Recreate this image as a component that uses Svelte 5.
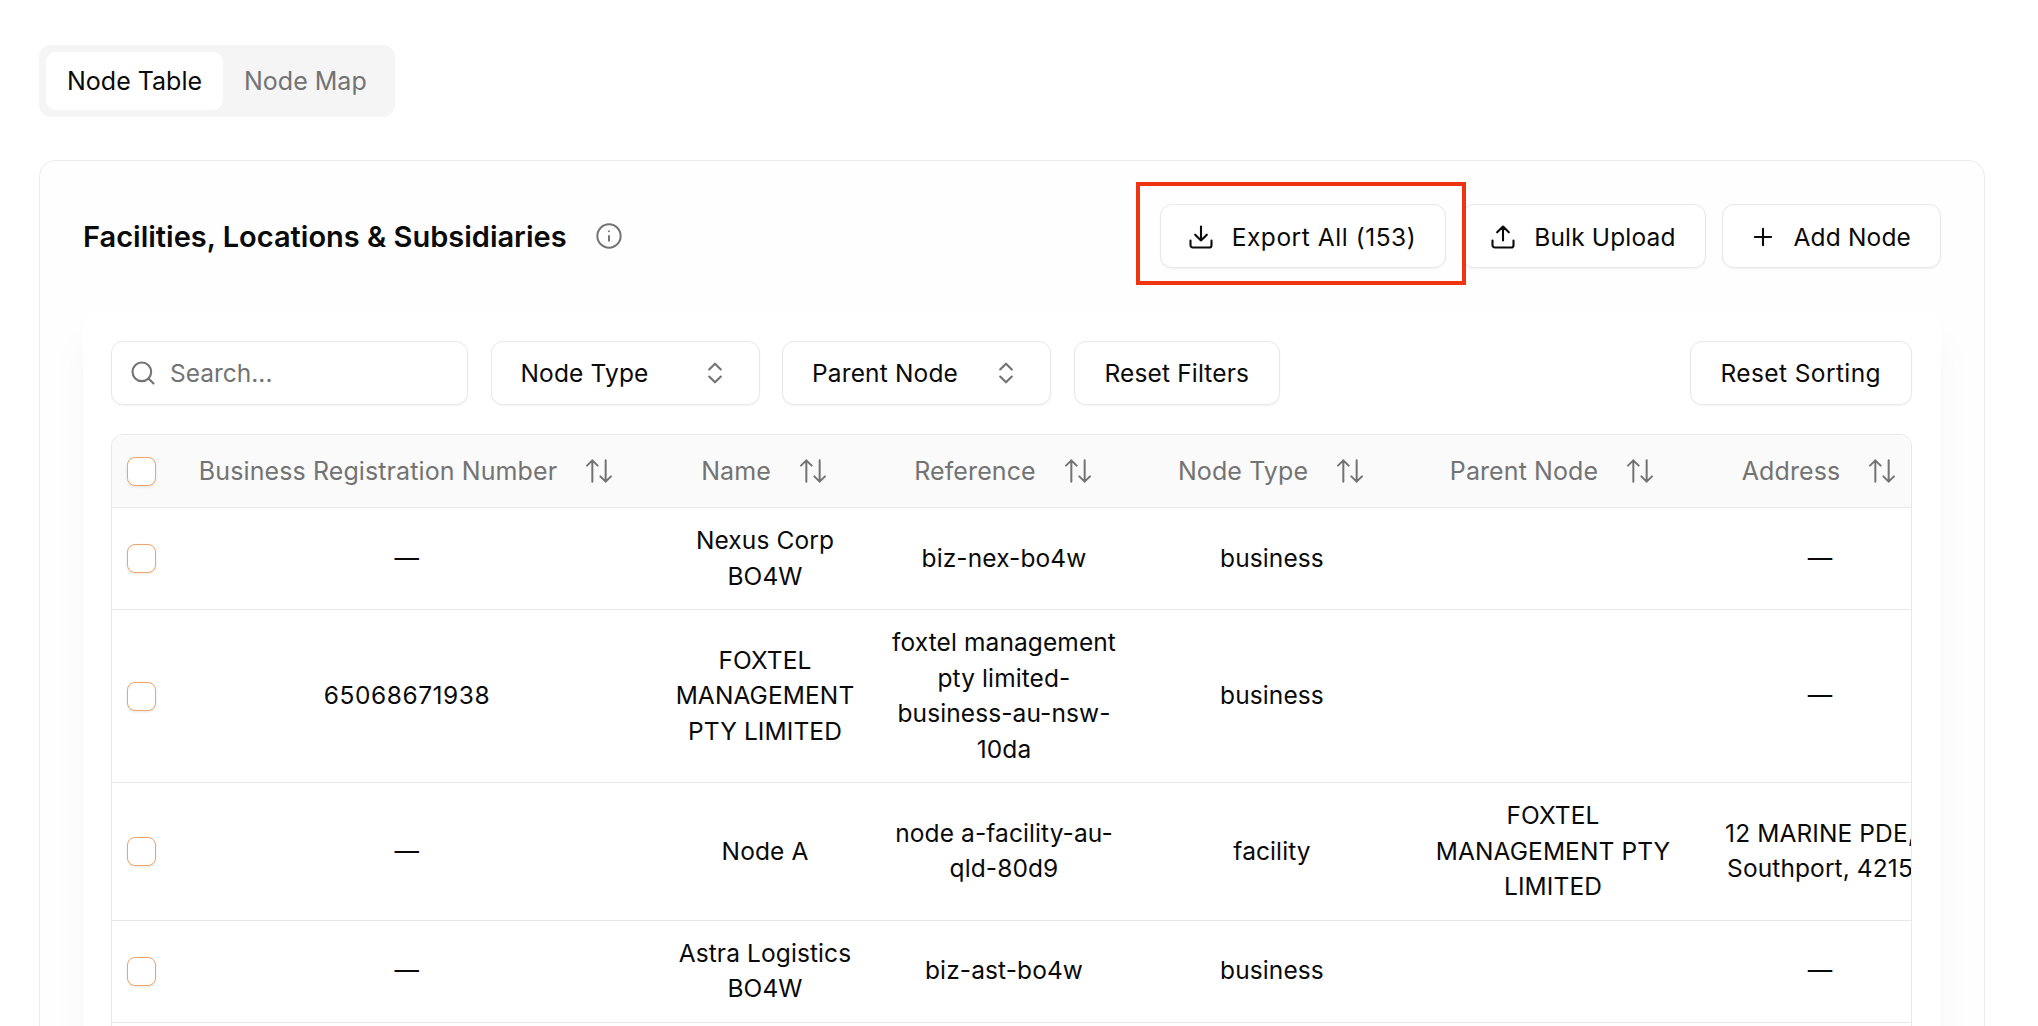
<script>
	const cols = [
		{ label: 'Business Registration Number', w: 480 },
		{ label: 'Name', w: 236 },
		{ label: 'Reference', w: 242 },
		{ label: 'Node Type', w: 294 },
		{ label: 'Parent Node', w: 268 },
		{ label: 'Address', w: 266 }
	];

	const rows = [
		{ brn: '—', name: 'Nexus Corp BO4W', ref: 'biz-nex-bo4w', type: 'business', parent: '', address: '—' },
		{ brn: '65068671938', name: 'FOXTEL MANAGEMENT PTY LIMITED', ref: 'foxtel management pty limited-business-au-nsw-10da', type: 'business', parent: '', address: '—' },
		{ brn: '—', name: 'Node A', ref: 'node a-facility-au-qld-80d9', type: 'facility', parent: 'FOXTEL MANAGEMENT PTY LIMITED', address: '12 MARINE PDE, Southport, 4215' },
		{ brn: '—', name: 'Astra Logistics BO4W', ref: 'biz-ast-bo4w', type: 'business', parent: '', address: '—' },
		// next row only starts at the fold
		{ brn: '', name: '', ref: '', type: '', parent: '', address: '' }
	];
</script>

<main>
	<div class="tabs">
		<button class="tab active">Node Table</button>
		<button class="tab">Node Map</button>
	</div>

	<section class="card">
		<header>
			<div class="title">
				<h2>Facilities, Locations &amp; Subsidiaries</h2>
				<svg class="info" viewBox="0 0 24 24"><circle cx="12" cy="12" r="10" /><path d="M12 16v-4M12 8h.01" /></svg>
			</div>
			<div class="actions">
				<div class="marked">
					<button class="btn">
						<svg viewBox="0 0 24 24"><path d="M21 15v4a2 2 0 0 1-2 2H5a2 2 0 0 1-2-2v-4M7 10l5 5 5-5M12 15V3" /></svg>
						Export All (153)
					</button>
				</div>
				<button class="btn">
					<svg viewBox="0 0 24 24"><path d="M21 15v4a2 2 0 0 1-2 2H5a2 2 0 0 1-2-2v-4M17 8l-5-5-5 5M12 3v12" /></svg>
					Bulk Upload
				</button>
				<button class="btn">
					<svg viewBox="0 0 24 24"><path d="M5 12h14M12 5v14" /></svg>
					Add Node
				</button>
			</div>
		</header>

		<div class="panel">
			<div class="filters">
				<label class="search">
					<svg viewBox="0 0 24 24"><circle cx="11" cy="11" r="8" /><path d="m21 21-4.3-4.3" /></svg>
					<input placeholder="Search..." />
				</label>
				<button class="btn select">Node Type <svg viewBox="0 0 24 24"><path d="m7 15 5 5 5-5M7 9l5-5 5 5" /></svg></button>
				<button class="btn select">Parent Node <svg viewBox="0 0 24 24"><path d="m7 15 5 5 5-5M7 9l5-5 5 5" /></svg></button>
				<button class="btn">Reset Filters</button>
				<button class="btn sorting">Reset Sorting</button>
			</div>

			<div class="table-wrap">
				<table>
					<colgroup>
						<col style="width: 55px" />
						{#each cols as col}<col style="width: {col.w}px" />{/each}
					</colgroup>
					<thead>
						<tr>
							<th><span class="check"></span></th>
							{#each cols as col}
								<th>
									<span class="head">
										{col.label}
										<svg viewBox="0 0 24 24"><path d="m21 16-4 4-4-4M17 20V4M3 8l4-4 4 4M7 4v16" /></svg>
									</span>
								</th>
							{/each}
						</tr>
					</thead>
					<tbody>
						{#each rows as row}
							<tr>
								<td><span class="check"></span></td>
								<td class="num">{row.brn}</td>
								<td>{row.name}</td>
								<td>{row.ref}</td>
								<td>{row.type}</td>
								<td>{row.parent}</td>
								<td>{row.address}</td>
							</tr>
						{/each}
					</tbody>
				</table>
			</div>
		</div>
	</section>
</main>

<style>
	:global(body) {
		height: 1026px;
		overflow: hidden;
		background: #fff;
	}
	main {
		height: 1026px;
		box-sizing: border-box;
		overflow: hidden;
		padding: 45px 53px 0 39px;
		font-family: Inter, "Liberation Sans", sans-serif;
		font-size: 24.5px;
		letter-spacing: .1px;
		color: #0a0a0a;
	}
	button {
		font: inherit;
		letter-spacing: .15px;
		color: inherit;
		cursor: pointer;
	}
	svg {
		fill: none;
		stroke: currentColor;
		stroke-width: 2;
		stroke-linecap: round;
		stroke-linejoin: round;
		flex: none;
	}

	.tabs {
		display: inline-flex;
		padding: 7px;
		background: #f5f5f5;
		border-radius: 12px;
		height: 72px;
		box-sizing: border-box;
		vertical-align: top;
	}
	.tab {
		border: none;
		background: none;
		font-size: 25px;
		padding: 0 21px;
		border-radius: 10px;
		color: #737373;
		letter-spacing: 0;
	}
	.tab.active {
		background: #fff;
		color: #0a0a0a;
	}

	.card {
		margin-top: 43px;
		border: 1px solid #ebebeb;
		border-radius: 16px;
		padding: 43px 43px 40px;
		background: #fefefe;
	}
	header {
		display: flex;
		justify-content: space-between;
		align-items: center;
	}
	.title {
		display: flex;
		align-items: center;
		gap: 28px;
	}
	h2 {
		margin: 0;
		padding-top: 2px;
		font-size: 29px;
		font-weight: 600;
		line-height: 36px;
		letter-spacing: 0;
	}
	.info {
		width: 28px;
		height: 28px;
		color: #737373;
		stroke-width: 1.7;
	}
	.actions {
		display: flex;
		gap: 16px;
	}
	.actions .btn {
		padding: 2px 29px 0 26px;
		gap: 17px;
	}
	.marked {
		position: relative;
		display: flex;
	}
	.marked .btn {
		letter-spacing: .55px;
	}
	.marked::after {
		content: "";
		position: absolute;
		inset: -22px -20px -17px -24px;
		border: 4px solid #f03410;
		pointer-events: none;
	}
	.btn {
		display: flex;
		align-items: center;
		gap: 14px;
		height: 64px;
		padding: 0 30px;
		box-sizing: border-box;
		background: #fff;
		border: 1px solid #e8e8e8;
		border-radius: 12px;
		box-shadow: 0 1px 2px rgba(0, 0, 0, .05);
		white-space: nowrap;
	}
	.btn svg {
		width: 28px;
		height: 28px;
		stroke-width: 1.8;
	}

	.panel {
		margin-top: 45px;
		padding: 28px 29px 60px 28px;
		background: #fff;
		border-radius: 16px;
		box-shadow: 0 24px 40px -2px rgba(0, 0, 0, .04);
	}
	.filters {
		display: flex;
		gap: 22.5px;
	}
	.search {
		display: flex;
		align-items: center;
		gap: 13px;
		width: 357px;
		height: 64px;
		padding: 0 17px;
		box-sizing: border-box;
		background: #fff;
		border: 1px solid #e8e8e8;
		border-radius: 12px;
		box-shadow: 0 1px 2px rgba(0, 0, 0, .05);
		color: #737373;
	}
	.search svg {
		width: 28px;
		height: 28px;
		stroke-width: 1.8;
	}
	.search input {
		flex: 1;
		min-width: 0;
		border: none;
		outline: none;
		padding: 0;
		font: inherit;
		background: none;
	}
	.search input::placeholder {
		color: #737373;
		opacity: 1;
	}
	.select {
		justify-content: space-between;
		width: 269px;
		padding-left: 29px;
	}
	.select svg {
		color: #737373;
	}
	.sorting {
		margin-left: auto;
		letter-spacing: .4px;
	}

	.table-wrap {
		margin-top: 29px;
		border: 1px solid #e8e8e8;
		border-radius: 12px 12px 0 0;
		overflow: hidden;
	}
	table {
		table-layout: fixed;
		width: 1841px;
		border-collapse: collapse;
	}
	th {
		height: 72px;
		padding: 0 8px;
		background: #fafafa;
		font-size: 25px;
		font-weight: 400;
		color: #737373;
		border-bottom: 1px solid #e8e8e8;
		white-space: nowrap;
	}
	.head {
		display: inline-flex;
		align-items: center;
		gap: 26px;
	}
	.head svg {
		width: 32px;
		height: 32px;
		stroke-width: 1.5;
	}
	td {
		padding: 15px 8px;
		line-height: 35.5px;
		text-align: center;
		border-bottom: 1px solid #e8e8e8;
	}
	td.num {
		letter-spacing: .55px;
	}
	.check {
		display: block;
		width: 29px;
		height: 29px;
		margin-left: 7px;
		box-sizing: border-box;
		background: #fff;
		border: 1.5px solid #f0a566;
		border-radius: 8px;
		box-shadow: 0 1px 3px rgba(0, 0, 0, .1);
	}
</style>
